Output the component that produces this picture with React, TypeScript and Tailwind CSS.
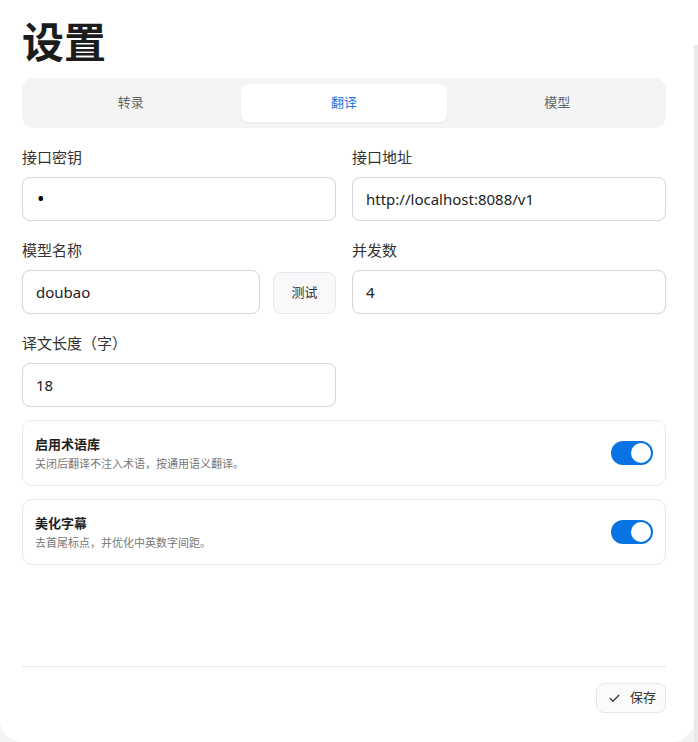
import { Check } from "lucide-react";

const font = "font-['Noto_Sans','Noto_Sans_CJK_SC',sans-serif]";

const tabs = ["转录", "翻译", "模型"];

const Field = ({
  label,
  value,
  children,
}: {
  label: string;
  value: React.ReactNode;
  children?: React.ReactNode;
}) => (
  <div className="flex flex-col gap-[10px]">
    <label className="text-[15px] leading-[20px] text-[#333]">{label}</label>
    <div className="flex gap-[13px]">
      <div className="flex h-[44px] flex-1 items-center rounded-[8px] border border-[#d4d4d4] bg-white px-[13px] text-[15px] text-[#222]">
        {value}
      </div>
      {children}
    </div>
  </div>
);

const Toggle = () => (
  <div className="flex h-[24px] w-[42px] items-center justify-end rounded-full bg-[#0a73e4] p-[2px]">
    <div className="h-[20px] w-[20px] rounded-full bg-white" />
  </div>
);

const SwitchCard = ({ title, desc }: { title: string; desc: string }) => (
  <div className="flex h-[66px] items-center justify-between rounded-[10px] border border-[#e8e8e8] bg-white pl-[12px] pr-[12px]">
    <div className="flex flex-col gap-[3px]">
      <span className="text-[13px] font-bold leading-[18px] text-[#1f1f1f]">{title}</span>
      <span className="text-[11px] leading-[15px] text-[#777]">{desc}</span>
    </div>
    <Toggle />
  </div>
);

export default function App() {
  return (
    <div className={`flex h-[742px] w-[698px] bg-[#f3f3f3] ${font}`}>
      <div className="flex h-full w-[694px] flex-col rounded-b-[22px] bg-white pl-[22px] pr-[28px] pt-[17px]">
        <h1 className="text-[42px] font-bold leading-[49px] text-[#1c1c1c]">设置</h1>

        <div className="mt-[12px] grid h-[50px] grid-cols-3 gap-[8px] rounded-[12px] bg-[#f3f4f6] p-[6px]">
          {tabs.map((t, i) => (
            <div
              key={t}
              className={
                i === 1
                  ? "flex items-center justify-center rounded-[8px] bg-white text-[13px] text-[#1a73e0] shadow-[0_1px_2px_rgba(0,0,0,0.05)]"
                  : "flex items-center justify-center text-[13px] text-[#666]"
              }
            >
              {t}
            </div>
          ))}
        </div>

        <div className="mt-[19px] grid grid-cols-2 gap-x-[16px] gap-y-[19px]">
          <Field
            label="接口密钥"
            value={<span className="pl-[1px] text-[20px] leading-none text-black">•</span>}
          />
          <Field label="接口地址" value="http://localhost:8088/v1" />
          <Field label="模型名称" value="doubao">
            <button className="mt-[2px] h-[42px] w-[63px] rounded-[8px] border border-[#e8e8ec] bg-[#f9f9fb] text-[13px] text-[#333]">
              测试
            </button>
          </Field>
          <Field label="并发数" value="4" />
          <Field label="译文长度（字）" value="18" />
        </div>

        <div className="mt-[13px] flex flex-col gap-[13px]">
          <SwitchCard title="启用术语库" desc="关闭后翻译不注入术语，按通用语义翻译。" />
          <SwitchCard title="美化字幕" desc="去首尾标点，并优化中英数字间距。" />
        </div>

        <div className="flex-1" />

        <div className="border-t border-[#e6e6e6] pb-[29px] pt-[16px]">
          <div className="flex justify-end">
            <button className="flex h-[30px] items-center gap-[9px] rounded-[8px] border border-[#e6e6ea] bg-[#fbfbfc] pl-[11px] pr-[9px] text-[13px] text-[#333]">
              <Check className="h-[13px] w-[13px]" strokeWidth={2.2} />
              保存
            </button>
          </div>
        </div>
      </div>
      <div className="flex flex-1 flex-col">
        <div className="h-[45px] bg-white" />
        <div className="flex-1 bg-[#e9e9e9]" />
      </div>
    </div>
  );
}
